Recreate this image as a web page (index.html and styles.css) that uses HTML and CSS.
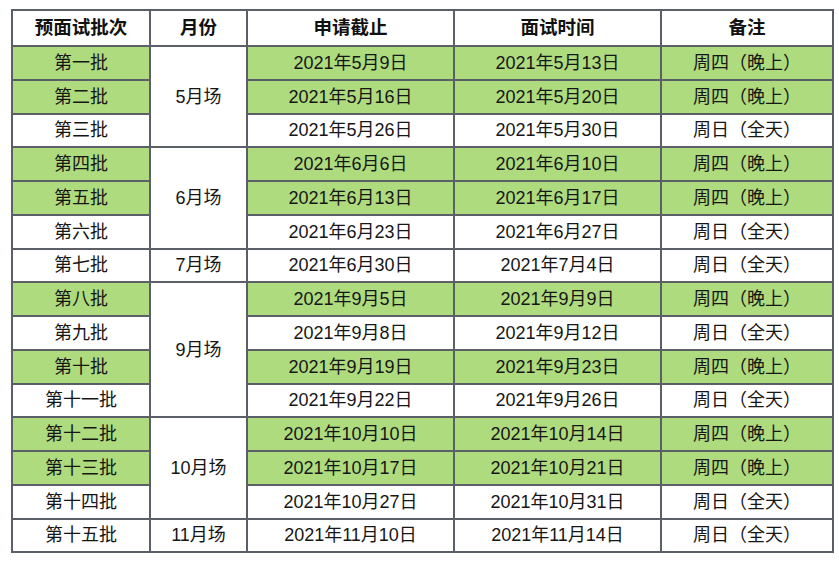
FILE: index.html
```html
<!DOCTYPE html>
<html lang="zh">
<head>
<meta charset="utf-8">
<link rel="stylesheet" href="styles.css">
</head>
<body>
<table class="sched">
<colgroup>
<col class="c1"><col class="c2"><col class="c3"><col class="c4"><col class="c5">
</colgroup>
<thead>
<tr><th>预面试批次</th><th>月份</th><th>申请截止</th><th>面试时间</th><th>备注</th></tr>
</thead>
<tbody>
<tr class="g"><td>第一批</td><td class="m" rowspan="3">5月场</td><td>2021年5月9日</td><td>2021年5月13日</td><td>周四（晚上）</td></tr>
<tr class="g"><td>第二批</td><td>2021年5月16日</td><td>2021年5月20日</td><td>周四（晚上）</td></tr>
<tr><td>第三批</td><td>2021年5月26日</td><td>2021年5月30日</td><td>周日（全天）</td></tr>
<tr class="g"><td>第四批</td><td class="m" rowspan="3">6月场</td><td>2021年6月6日</td><td>2021年6月10日</td><td>周四（晚上）</td></tr>
<tr class="g"><td>第五批</td><td>2021年6月13日</td><td>2021年6月17日</td><td>周四（晚上）</td></tr>
<tr><td>第六批</td><td>2021年6月23日</td><td>2021年6月27日</td><td>周日（全天）</td></tr>
<tr><td>第七批</td><td class="m">7月场</td><td>2021年6月30日</td><td>2021年7月4日</td><td>周日（全天）</td></tr>
<tr class="g"><td>第八批</td><td class="m" rowspan="4">9月场</td><td>2021年9月5日</td><td>2021年9月9日</td><td>周四（晚上）</td></tr>
<tr><td>第九批</td><td>2021年9月8日</td><td>2021年9月12日</td><td>周日（全天）</td></tr>
<tr class="g"><td>第十批</td><td>2021年9月19日</td><td>2021年9月23日</td><td>周四（晚上）</td></tr>
<tr><td>第十一批</td><td>2021年9月22日</td><td>2021年9月26日</td><td>周日（全天）</td></tr>
<tr class="g"><td>第十二批</td><td class="m" rowspan="3">10月场</td><td>2021年10月10日</td><td>2021年10月14日</td><td>周四（晚上）</td></tr>
<tr class="g"><td>第十三批</td><td>2021年10月17日</td><td>2021年10月21日</td><td>周四（晚上）</td></tr>
<tr><td>第十四批</td><td>2021年10月27日</td><td>2021年10月31日</td><td>周日（全天）</td></tr>
<tr><td>第十五批</td><td class="m">11月场</td><td>2021年11月10日</td><td>2021年11月14日</td><td>周日（全天）</td></tr>
</tbody>
</table>
</body>
</html>
```
FILE: styles.css
```css
html, body {
  margin: 0;
  padding: 0;
  background: #ffffff;
}
body {
  padding: 9px 0 0 11px;
  font-family: "Liberation Sans", "Noto Sans CJK SC", sans-serif;
  color: #161616;
}
.sched {
  border-collapse: collapse;
  table-layout: fixed;
  width: 821px;
}
.c1 { width: 138px; }
.c2 { width: 97px; }
.c3 { width: 207px; }
.c4 { width: 207px; }
.c5 { width: 172px; }
.sched th,
.sched td {
  border: 2px solid #5b6068;
  text-align: center;
  vertical-align: middle;
  padding: 0;
  font-size: 18px;
  line-height: 20px;
}
.sched th {
  height: 34px;
  font-size: 18.5px;
  font-weight: bold;
  color: #111111;
}
.sched td {
  height: 31.75px;
}
.sched tr.g td {
  background: #aedb7e;
}
.sched tr.g td.m,
.sched td.m {
  background: #ffffff;
}
```
